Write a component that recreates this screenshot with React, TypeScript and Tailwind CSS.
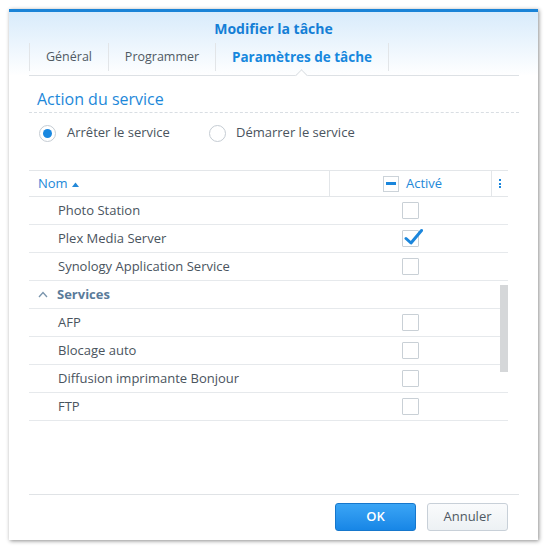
import React from "react";

function Checkbox({ checked = false }: { checked?: boolean }) {
  return (
    <div className="relative w-[17px] h-[17px] border border-[#c9d0d6] bg-white rounded-[1px]">
      {checked && (
        <svg className="absolute left-[1px] -top-[3px]" width="19" height="18" viewBox="0 0 19 18">
          <path d="M2 10.5 L7 15 L17.5 2.5" fill="none" stroke="#1b86dc" strokeWidth="3" strokeLinecap="round" strokeLinejoin="round" />
        </svg>
      )}
    </div>
  );
}

function Row({ name, checked = false }: { name: string; checked?: boolean }) {
  return (
    <div className="flex items-center h-[28px] border-b border-[#e6e9ec]">
      <div className="w-[301px] pl-[29px] text-[13px] text-[#4a545e] leading-none">{name}</div>
      <div className="pl-[72px] flex items-center">
        <Checkbox checked={checked} />
      </div>
    </div>
  );
}

export default function App() {
  return (
    <div className="w-[545px] h-[552px] bg-white pl-[9px] pt-[9px] font-['Open_Sans',sans-serif]">
      <div className="w-[529px] h-[531px] bg-white border-t-[3px] border-[#1a83d7] shadow-[1px_1px_4px_rgba(0,0,0,0.45)] flex flex-col">
        {/* Header */}
        <div className="bg-linear-to-b from-[#d8ebfb] to-white">
          <div className="h-[30px] pt-[3px] flex items-center justify-center text-[14px] font-bold text-[#157fd6]">
            Modifier la tâche
          </div>
          <div className="relative h-[34px] ml-5 mr-[19px] border-b border-[#dde1e5] flex items-start">
            <div className="w-[80px] h-[28px] mt-[1px] border-l border-r border-[#e2e5e8] flex items-center justify-center text-[12.5px] text-[#505a64]">
              Général
            </div>
            <div className="w-[107px] h-[28px] mt-[1px] border-r border-[#e2e5e8] flex items-center justify-center text-[12.5px] text-[#505a64]">
              Programmer
            </div>
            <div className="w-[173px] h-[28px] mt-[1px] border-r border-[#e2e5e8] flex items-center justify-center text-[13.5px] font-bold text-[#1687dd]">
              Paramètres de tâche
            </div>
            <div className="absolute left-[268px] -bottom-[5px] w-[9px] h-[9px] bg-white border-l border-t border-[#dde1e5] rotate-45" />
          </div>
        </div>

        {/* Section title */}
        <div className="ml-5 mr-[19px] pt-[13px] pb-[3px] border-b border-dashed border-[#d9dee3]">
          <div className="text-[16px] leading-[20px] text-[#1d88d9] pl-[8px]">Action du service</div>
        </div>

        {/* Radios */}
        <div className="ml-5 mt-[11px] flex items-center h-[18px] pl-[10px] text-[13px] text-[#4a545e]">
          <div className="w-[170px] flex items-center gap-[11px]">
            <div className="w-[17px] h-[17px] rounded-full border border-[#c5ccd3] bg-white flex items-center justify-center">
              <div className="w-[9px] h-[9px] rounded-full bg-[#1a88e0]" />
            </div>
            <span>Arrêter le service</span>
          </div>
          <div className="flex items-center gap-[10px]">
            <div className="w-[17px] h-[17px] rounded-full border border-[#c5ccd3] bg-white" />
            <span>Démarrer le service</span>
          </div>
        </div>

        {/* Table */}
        <div className="relative ml-5 mt-[28px] w-[479px] border-t border-[#e3e6e9]">
          <div className="flex h-[26px] border-b border-[#e3e6e9] text-[13px]">
            <div className="w-[301px] border-r border-[#e3e6e9] pl-[9px] flex items-center gap-[4px] text-[#2388d8]">
              <span>Nom</span>
              <svg width="7" height="5" viewBox="0 0 7 5" className="mt-[1px]">
                <path d="M0 5 L3.5 0.5 L7 5 Z" fill="#2388d8" />
              </svg>
            </div>
            <div className="w-[162px] border-r border-[#e3e6e9] pl-[53px] flex items-center gap-[7px] text-[#2388d8]">
              <div className="w-[16px] h-[16px] border border-[#ccd3d9] bg-white flex items-center justify-center">
                <div className="w-[10px] h-[3px] bg-[#1a86dc]" />
              </div>
              <span>Activé</span>
            </div>
            <div className="flex-1 flex flex-col items-center justify-center gap-[1.5px]">
              <div className="w-[2px] h-[2px] bg-[#1a86dc]" />
              <div className="w-[2px] h-[2px] bg-[#1a86dc]" />
              <div className="w-[2px] h-[2px] bg-[#1a86dc]" />
            </div>
          </div>
          <Row name="Photo Station" />
          <Row name="Plex Media Server" checked />
          <Row name="Synology Application Service" />
          <div className="flex items-center h-[28px] border-b border-[#e6e9ec] pl-[9px] gap-[9px]">
            <svg width="10" height="7" viewBox="0 0 10 7">
              <path d="M1 6 L5 1.5 L9 6" fill="none" stroke="#7a95ad" strokeWidth="1.3" />
            </svg>
            <span className="text-[13px] font-bold text-[#5a7b9a]">Services</span>
          </div>
          <Row name="AFP" />
          <Row name="Blocage auto" />
          <Row name="Diffusion imprimante Bonjour" />
          <Row name="FTP" />
          <div className="absolute left-[471px] top-[114px] w-[8px] h-[87px] bg-[#d5d7d9]" />
        </div>

        {/* Footer */}
        <div className="mt-auto ml-5 mr-[19px] border-t border-[#e0e3e6] pt-[8px] pb-[9px] pr-[11px] flex justify-end gap-[11px]">
          <button className="w-[81px] h-[28px] rounded-[3px] border border-[#1677cc] bg-linear-to-b from-[#3aa5f5] to-[#1786e6] text-white text-[13px] font-semibold">
            OK
          </button>
          <button className="w-[81px] h-[28px] rounded-[3px] border border-[#c8d0d8] bg-linear-to-b from-[#fafbfc] to-[#edf1f4] text-[#4f5963] text-[13px]">
            Annuler
          </button>
        </div>
      </div>
    </div>
  );
}
